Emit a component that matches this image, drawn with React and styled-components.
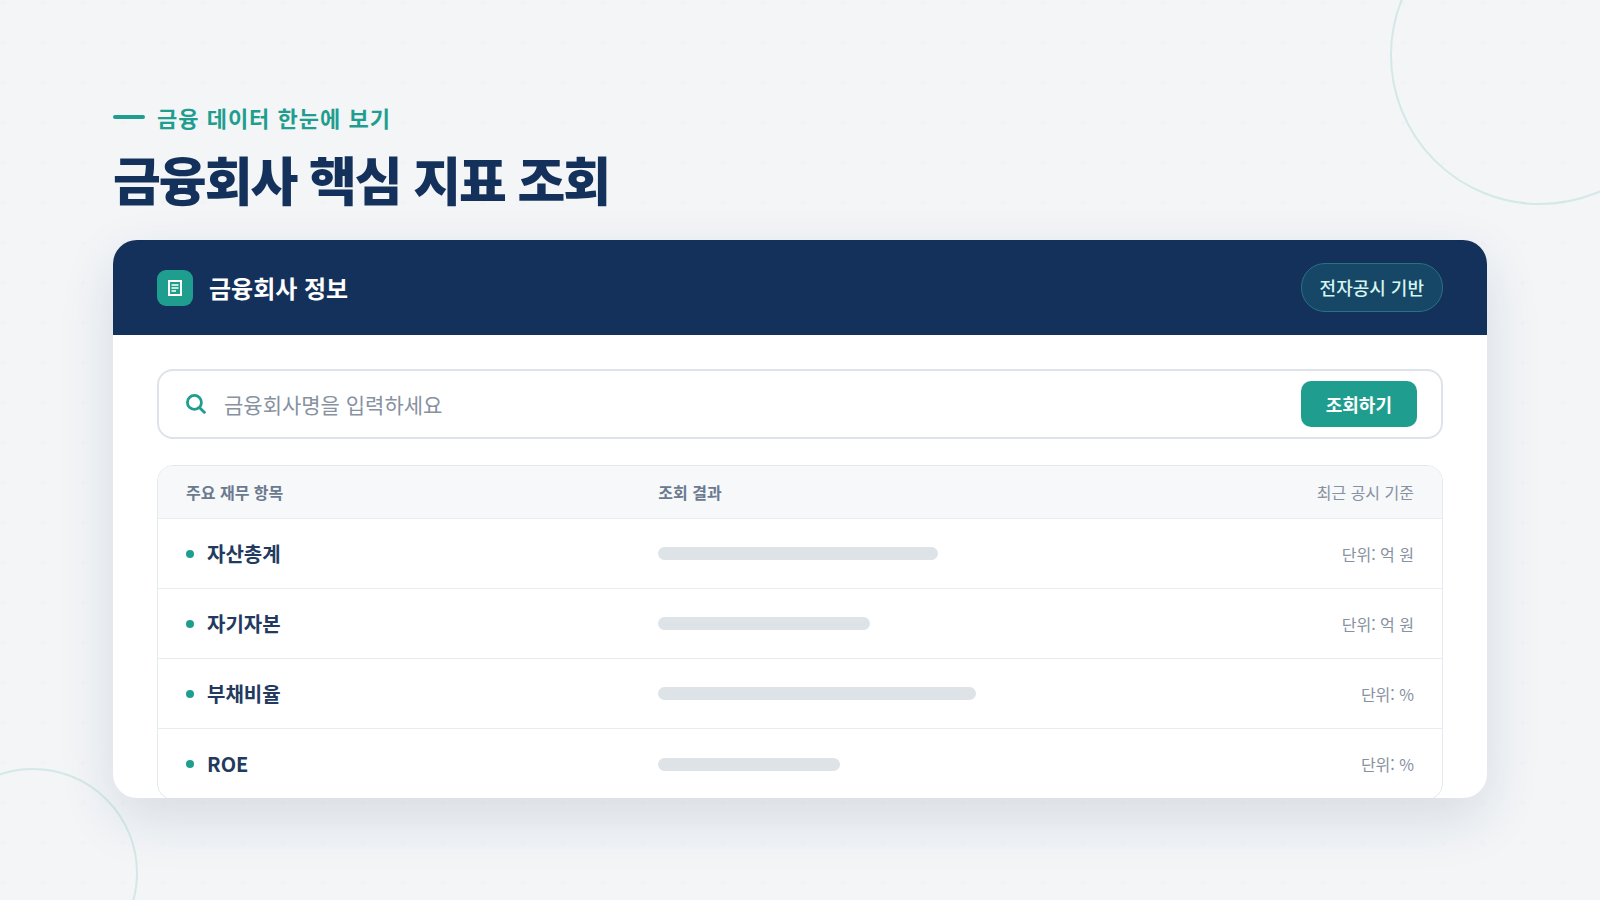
import React from 'react';
import styled, { createGlobalStyle } from 'styled-components';

const GlobalStyle = createGlobalStyle`
  *, *::before, *::after { box-sizing: border-box; }
  body {
    margin: 0;
    font-family: "Noto Sans CJK KR", "Noto Sans", sans-serif;
    color: #14315b;
  }
`;

const Page = styled.main`
  position: relative;
  display: flex;
  flex-direction: column;
  height: 100vh;
  padding: 101px 113px 102px;
  overflow: hidden;
  background-color: #f3f5f7;
  background-image: radial-gradient(circle at 3px 3px, rgba(20, 49, 91, 0.01) 2px, transparent 3px);
  background-size: 40px 40px;
`;

const Ring = styled.div`
  position: absolute;
  width: ${(p) => p.$size}px;
  height: ${(p) => p.$size}px;
  border: 2px solid rgba(31, 158, 143, 0.14);
  border-radius: 50%;
`;

const TopRing = styled(Ring)`
  top: -95px;
  right: -90px;
`;

const BottomRing = styled(Ring)`
  bottom: -78px;
  left: -72px;
`;

const Eyebrow = styled.p`
  display: flex;
  align-items: center;
  gap: 12px;
  margin: 0;
  font-size: 22px;
  line-height: 32px;
  font-weight: 700;
  letter-spacing: 1px;
  color: #1f9e8f;

  &::before {
    content: "";
    width: 32px;
    height: 4px;
    border-radius: 2px;
    background: currentColor;
  }
`;

const Title = styled.h1`
  margin: 7px 0 22px;
  font-size: 52px;
  line-height: 78px;
  font-weight: 900;
  letter-spacing: -2px;
`;

const Card = styled.section`
  position: relative;
  display: flex;
  flex: 1;
  flex-direction: column;
  min-height: 0;
  border-radius: 24px;
  overflow: hidden;
  background: #fff;
  box-shadow: 0 20px 56px rgba(20, 49, 91, 0.12);
`;

const CardHeader = styled.header`
  display: flex;
  flex: none;
  align-items: center;
  justify-content: space-between;
  height: 95px;
  padding: 0 44px;
  background: #14315b;
`;

const CardTitle = styled.h2`
  display: flex;
  align-items: center;
  gap: 16px;
  margin: 0;
  font-size: 24px;
  line-height: 36px;
  font-weight: 700;
  color: #fff;
`;

const IconTile = styled.span`
  display: grid;
  place-items: center;
  width: 36px;
  height: 36px;
  border-radius: 9px;
  background: #1f9e8f;
`;

const Badge = styled.span`
  padding: 10px 18px;
  border: 1px solid #2b7182;
  border-radius: 24px;
  background: #174766;
  font-size: 18px;
  line-height: 27px;
  font-weight: 500;
  color: #d5f5f1;
`;

const CardBody = styled.div`
  padding: 34px 44px;
`;

const SearchForm = styled.form`
  display: flex;
  align-items: center;
  height: 70px;
  margin-bottom: 26px;
  padding: 0 24px 0 27px;
  border: 2px solid #dde3e8;
  border-radius: 16px;
`;

const SearchInput = styled.input`
  flex: 1;
  min-width: 0;
  margin-left: 18px;
  padding: 0;
  border: 0;
  outline: 0;
  background: transparent;
  font: inherit;
  font-size: 21px;
  line-height: 32px;
  color: #14315b;

  &::placeholder {
    color: #87919f;
    opacity: 1;
  }
`;

const SearchButton = styled.button`
  height: 46px;
  padding: 0 25px;
  border: 0;
  border-radius: 10px;
  background: #1f9e8f;
  font: inherit;
  font-size: 18px;
  font-weight: 700;
  color: #fff;
`;

const Table = styled.table`
  display: block;
  border: 1px solid #e4e9ed;
  border-radius: 16px;
  overflow: hidden;
`;

const TableHead = styled.thead`
  display: block;
  background: #f6f8fa;
`;

const TableBody = styled.tbody`
  display: block;
`;

const Row = styled.tr`
  display: grid;
  grid-template-columns: 5fr 4fr 4fr;
  align-items: center;
  height: ${(p) => (p.$head ? 53 : 70)}px;
  padding: 0 28px;
  border-bottom: 1px solid #e9edf0;

  ${TableBody} &:last-child { border-bottom: 0; }
`;

const HeadCell = styled.th`
  padding: 0;
  font-size: 16px;
  line-height: 24px;
  font-weight: ${(p) => (p.$end ? 400 : 700)};
  text-align: ${(p) => (p.$end ? 'right' : 'left')};
  color: ${(p) => (p.$end ? '#87919f' : '#6b7a8f')};
`;

const ItemCell = styled.th`
  display: flex;
  align-items: center;
  gap: 13px;
  padding: 0;
  font-size: 20px;
  line-height: 30px;
  font-weight: 700;
  text-align: left;
  color: #223a60;

  &::before {
    content: "";
    width: 8px;
    height: 8px;
    border-radius: 50%;
    background: #1f9e8f;
  }
`;

const ResultCell = styled.td`
  padding: 0;
`;

const Placeholder = styled.div`
  height: 13px;
  border-radius: 7px;
  background: #dde3e7;
`;

const UnitCell = styled.td`
  padding: 0;
  font-size: 16px;
  line-height: 24px;
  text-align: right;
  color: #87919f;
`;

const items = [
  { name: '자산총계', width: 74, unit: '단위: 억 원' },
  { name: '자기자본', width: 56, unit: '단위: 억 원' },
  { name: '부채비율', width: 84, unit: '단위: %' },
  { name: 'ROE', width: 48, unit: '단위: %' },
];

const DocumentIcon = () => (
  <svg width="16" height="18" viewBox="0 0 16 18" fill="none" stroke="#fff" strokeWidth="2" aria-hidden="true">
    <path d="M2 2h12v14H2z" />
    <path d="M4.5 6h7M4.5 9h7M4.5 12h4.5" strokeWidth="1.6" />
  </svg>
);

const SearchIcon = () => (
  <svg width="20" height="20" viewBox="0 0 20 20" fill="none" stroke="#1f9e8f" strokeWidth="2.8" aria-hidden="true">
    <circle cx="8.4" cy="8.4" r="7" />
    <path d="M13.4 13.4l5.8 5.8" />
  </svg>
);

export default function App() {
  return (
    <>
      <GlobalStyle />
      <Page lang="ko">
        <TopRing $size={300} />
        <Eyebrow>금융 데이터 한눈에 보기</Eyebrow>
        <Title>금융회사 핵심 지표 조회</Title>
        <Card>
          <CardHeader>
            <CardTitle>
              <IconTile><DocumentIcon /></IconTile>
              금융회사 정보
            </CardTitle>
            <Badge>전자공시 기반</Badge>
          </CardHeader>
          <CardBody>
            <SearchForm onSubmit={(e) => e.preventDefault()}>
              <SearchIcon />
              <SearchInput type="text" aria-label="금융회사명" placeholder="금융회사명을 입력하세요" />
              <SearchButton type="submit">조회하기</SearchButton>
            </SearchForm>
            <Table>
              <TableHead>
                <Row $head>
                  <HeadCell scope="col">주요 재무 항목</HeadCell>
                  <HeadCell scope="col">조회 결과</HeadCell>
                  <HeadCell scope="col" $end>최근 공시 기준</HeadCell>
                </Row>
              </TableHead>
              <TableBody>
                {items.map((item) => (
                  <Row key={item.name}>
                    <ItemCell scope="row">{item.name}</ItemCell>
                    <ResultCell><Placeholder style={{ width: `${item.width}%` }} /></ResultCell>
                    <UnitCell>{item.unit}</UnitCell>
                  </Row>
                ))}
              </TableBody>
            </Table>
          </CardBody>
        </Card>
        <BottomRing $size={210} />
      </Page>
    </>
  );
}
